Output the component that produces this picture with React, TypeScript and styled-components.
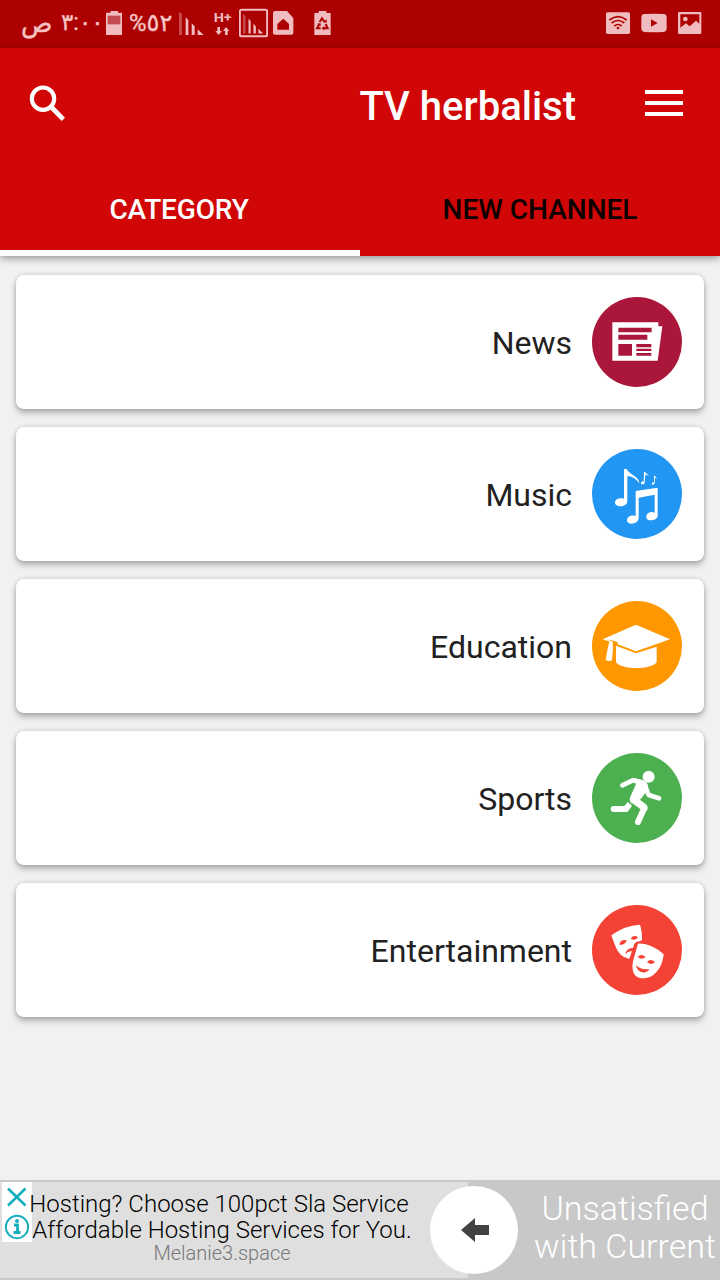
import React from 'react';
import styled, { createGlobalStyle } from 'styled-components';

const GlobalStyle = createGlobalStyle`
  * { box-sizing: border-box; }
  body { margin: 0; background: #f1f1f1; font-family: Roboto, "Liberation Sans", sans-serif; }
  svg { display: block; flex: none; }
`;

const Screen = styled.div`
  width: 720px;
  height: 1280px;
  display: flex;
  flex-direction: column;
  overflow: hidden;
  background: #f1f1f1;
`;

const StatusBar = styled.div`
  height: 48px;
  flex: none;
  display: flex;
  justify-content: space-between;
  padding: 0 18px 0 21px;
  background: #ad0000;
  color: #f5c4c4;
`;

const StatusGroup = styled.div`
  display: flex;
  align-items: flex-start;
`;

const StatusText = styled.span<{ $width: number; $gap?: number; $size?: number; $tracking?: number }>`
  width: ${p => p.$width}px;
  margin-left: ${p => p.$gap ?? 0}px;
  font: 400 ${p => p.$size ?? 26}px/46px Roboto, "DejaVu Sans", sans-serif;
  letter-spacing: ${p => p.$tracking ?? 0}px;
  -webkit-text-stroke: 0.4px currentColor;
  white-space: nowrap;
  display: flex;
  justify-content: flex-start;
`;

const StatusIcon = styled.svg<{ $gap?: number }>`
  height: 48px;
  margin-left: ${p => p.$gap ?? 0}px;
  fill: #f0bcbf;
`;

const NetworkLabel = styled.text`
  font: 700 39px Roboto, sans-serif;
`;

const Header = styled.header`
  height: 208px;
  flex: none;
  display: flex;
  flex-direction: column;
  background: #d10606;
  box-shadow: 0 2px 8px rgba(0, 0, 0, 0.42);
  z-index: 1;
`;

const Toolbar = styled.div`
  height: 112px;
  display: flex;
  align-items: center;
  padding: 0 37px 2px 27px;
`;

const Title = styled.h1`
  flex: 1;
  margin: 8px 69px 0 0;
  text-align: right;
  font-size: 40px;
  line-height: 48px;
  font-weight: 500;
  color: #fff;
`;

const Tabs = styled.div`
  height: 96px;
  display: flex;
`;

const Tab = styled.div<{ $active?: boolean }>`
  width: 50%;
  display: flex;
  align-items: center;
  justify-content: center;
  padding: ${p => (p.$active ? '8px 2px 0 0' : '2px 0 0')};
  border-bottom: ${p => (p.$active ? '6px solid #fff' : 'none')};
  font-size: 28px;
  font-weight: 500;
  letter-spacing: ${p => (p.$active ? '-0.15px' : '0')};
  color: ${p => (p.$active ? '#fff' : '#0d0000')};
`;

const List = styled.main`
  flex: 1;
  display: flex;
  flex-direction: column;
  gap: 18px;
  padding: 19px 16px 0;
`;

const Card = styled.div`
  height: 134px;
  display: flex;
  align-items: center;
  justify-content: flex-end;
  gap: 20px;
  padding-right: 22px;
  border-radius: 8px;
  background: #fff;
  box-shadow: 0 4px 6px rgba(0, 0, 0, 0.26), 0 0 4px rgba(0, 0, 0, 0.16);
`;

const CardLabel = styled.span`
  font-size: 32px;
  line-height: 38px;
  margin-top: 1px;
  color: #212121;
`;

const Ad = styled.footer`
  height: 100px;
  flex: none;
  display: flex;
  position: relative;
  padding: 2px 0;
  background: #c8c8c8;
  white-space: nowrap;
`;

const AdCopy = styled.div`
  width: 468px;
  display: flex;
  background: #dfdfdf;
`;

const AdControls = styled.div`
  width: 30px;
  height: 60px;
  margin-left: 2px;
  flex: none;
  background: #fff;
`;

const AdLines = styled.div`
  width: 380px;
  margin-left: -2px;
  padding-top: 9px;
  display: flex;
  flex-direction: column;
  align-items: center;
`;

const AdLine = styled.span<{ $shift?: number }>`
  margin-left: ${p => p.$shift ?? 0}px;
  font-size: 24px;
  line-height: 26px;
  font-weight: 300;
  color: #000;
`;

const AdSource = styled.span`
  margin-left: 4px;
  font-size: 20px;
  line-height: 20px;
  font-weight: 300;
  color: #777;
`;

const AdHeadline = styled.div`
  flex: 1;
  padding: 7px 0 0 62px;
  font-size: 34px;
  line-height: 38px;
  font-weight: 300;
  text-align: center;
  color: #fff;
`;

const AdButton = styled.div`
  position: absolute;
  left: 430px;
  top: 6px;
  width: 88px;
  height: 88px;
  border-radius: 50%;
  background: #fff;
  display: flex;
  align-items: center;
  justify-content: center;
  padding: 0 0 1px 2px;
`;

const NewsArt = () => (
  <svg width="90" height="90" viewBox="36 36 270 270">
    <circle cx="171" cy="171" r="135" fill="#aa173b" />
    <path fill="#fff" fillRule="evenodd" d="M97 112H235V124H247L233 227H97ZM115 128V142H215V128ZM115 149V164H202V149ZM115 177V212H156V177ZM169 177V187H214V177ZM169 191V198H214V191ZM169 204V212H214V204Z" />
  </svg>
);

const MusicArt = () => (
  <svg width="90" height="90" viewBox="36 27 270 270">
    <circle cx="171" cy="162" r="135" fill="#2196f3" />
    <g fill="#fff">
      <path d="M132 87L140 87C147 103 168 104 177 124L178 130C167 114 154 109 142 108V183C142 194 131 199 121 199C111 199 104 193 105 186C106 178 117 172 132 176Z" />
      <path d="M167 153L233 143V228C231 237 222 241 212 241C203 241 197 235 199 228C202 218 213 213 224 218V164L176 173V235C174 246 165 251 155 251C146 251 140 246 141 239C143 229 154 224 167 228Z" />
      <path d="M192 96L195 96C197 101 205 103 207 109C202 105 198 104 196 104L194 128C192 134 183 135 183 130C183 126 187 124 191 125Z" />
      <path d="M222 107L225 107C226 111 230 112 231 117C228 114 226 113 225 113L224 130C222 135 215 136 216 131C216 128 219 126 222 127Z" />
    </g>
  </svg>
);

const EducationArt = () => (
  <svg width="90" height="90" viewBox="36 33 270 270">
    <circle cx="171" cy="168" r="135" fill="#ff9800" />
    <g fill="#fff">
      <path d="M168 104L270 148L168 184L113 163L112 156L93 151L90 155L68 148Z" />
      <path d="M108 167L168 190L230 170V217C217 240 122 240 108 217Z" />
      <path d="M89 154C92 150 99 152 98 157L99 174L96 210C91 214 83 213 77 210C80 197 83 169 89 154Z" />
    </g>
    <path d="M87 150Q96 151 102 156L113 158" fill="none" stroke="#ff9800" strokeWidth="2" />
  </svg>
);

const SportsArt = () => (
  <svg width="90" height="90" viewBox="36 39 270 270">
    <circle cx="171" cy="174" r="135" fill="#4caf50" />
    <circle cx="206" cy="110" r="18" fill="#fff" />
    <path fill="#fff" d="M157 113L188 120Q204 126 203 138L197 158L180 179L201 196Q205 204 201 212L181 207L153 187Q146 181 151 170L168 132Z" />
    <g fill="none" stroke="#fff" strokeLinecap="round" strokeLinejoin="round">
      <path strokeWidth="14" d="M127 136L158 121L181 126" />
      <path strokeWidth="14" d="M195 136L206 165L237 175" />
      <path strokeWidth="18" d="M164 182L193 204L174 246" />
      <path strokeWidth="18" d="M147 195L138 207H101" />
    </g>
    <path d="M143 183L159 197" stroke="#4caf50" strokeWidth="4" />
  </svg>
);

const EntertainmentArt = () => (
  <svg width="90" height="90" viewBox="36 45 270 270">
    <circle cx="171" cy="180" r="135" fill="#f44336" />
    <g fill="#fff">
      <path d="M94 136Q134 106 180 104Q187 124 186 151L174 155Q162 157 160 174L148 207Q118 202 105 166Z" />
      <path d="M174 161Q211 158 251 193C248 228 226 264 191 265C157 265 154 237 160 210Z" />
    </g>
    <g fill="#f44336">
      <path d="M118 164Q121 147 140 151Q136 166 118 164Z" />
      <path d="M152 146Q158 133 174 141Q168 154 152 146Z" />
      <path d="M136 193Q139 173 161 173L157 184Q145 181 136 193Z" />
      <path d="M173 201Q183 189 197 201Q186 212 173 201Z" />
      <path d="M201 216Q212 204 225 216Q214 228 201 216Z" />
      <path d="M168 226Q184 241 208 237Q202 249 187 247Q171 244 168 226Z" />
    </g>
    <path d="M174 157Q165 158 163 172L151 207" fill="none" stroke="#f44336" strokeWidth="5" />
  </svg>
);

const categories = [
  { name: 'News', Art: NewsArt },
  { name: 'Music', Art: MusicArt },
  { name: 'Education', Art: EducationArt },
  { name: 'Sports', Art: SportsArt },
  { name: 'Entertainment', Art: EntertainmentArt },
];

const SignalBars = () => (
  <>
    <path d="M27 35L36 42V105H27Z" opacity=".4" />
    <path d="M47 52L55 60V105H47Z" />
    <path d="M65 70L74 79V105H65Z" />
    <path d="M83 88L101 105H83Z" />
  </>
);

export default function App() {
  return (
    <>
      <GlobalStyle />
      <Screen>
        <StatusBar>
          <StatusGroup>
            <StatusText $width={31}>ص</StatusText>
            <StatusText $width={37} $gap={9} $size={23} $tracking={-4}>٣:٠٠</StatusText>
            <StatusIcon $gap={8} width="16" viewBox="318 0 48 144">
              <path d="M332 33H354V38H366V105H318V38H332Z" />
              <path d="M323 47H361V73H323Z" fill="#c34c50" />
            </StatusIcon>
            <StatusText $width={41} $gap={7} $size={24} $tracking={-2.2}>%٥٢</StatusText>
            <StatusIcon $gap={9} width="25" viewBox="27 0 75 144"><SignalBars /></StatusIcon>
            <StatusIcon $gap={10} width="18" viewBox="133 0 54 144">
              <NetworkLabel x="132" y="66" textLength="54" lengthAdjust="spacingAndGlyphs">H+</NetworkLabel>
              <path d="M143 81H151V93H157L147 105L137 93H143ZM166 105V93H160L169 81L179 93H174V105Z" />
            </StatusIcon>
            <StatusIcon $gap={7} width="29" viewBox="207 0 87 144">
              <rect x="209.500" y="29.500" width="82" height="79" rx="5" fill="none" stroke="#f0bcbf" strokeWidth="6" />
              <g transform="translate(197 13) scale(.82 .83)"><SignalBars /></g>
            </StatusIcon>
            <StatusIcon $gap={5} width="21" viewBox="309 0 63 144">
              <path fillRule="evenodd" d="M315 33H351L370 54V99Q370 104 365 104H315Q309 104 309 99V39Q309 33 315 33ZM340 56L322 72V89H357V72Z" />
            </StatusIcon>
            <StatusIcon $gap={20} width="17" viewBox="431 0 51 144">
              <path d="M445 33H468V39H481V105H432V39H445Z" />
              <g fill="none" stroke="#ad0000" strokeWidth="6">
                <path d="M448 66L455 55L463 66" />
                <path d="M447 72L440 85H451" />
                <path d="M466 72L472 85H458" />
              </g>
              <path fill="#ad0000" d="M460 68L470 67L468 57ZM440 72L450 69L452 78ZM462 78V92L454 85Z" />
            </StatusIcon>
          </StatusGroup>
          <StatusGroup>
            <StatusIcon width="24" viewBox="48 0 72 144">
              <rect x="48" y="37" width="72" height="65" rx="5" />
              <g fill="none" stroke="#ad0000" strokeWidth="5">
                <path d="M58 60Q84 40 110 60" />
                <path d="M65 69Q84 54 103 69" />
                <path d="M73 78Q84 69 95 78" />
              </g>
              <circle cx="84" cy="84" r="4" fill="#ad0000" />
            </StatusIcon>
            <StatusIcon $gap={11} width="26" viewBox="153 0 78 144">
              <path fillRule="evenodd" d="M163 42Q192 40 221 42Q230 43 230 53V85Q230 95 221 96Q192 98 163 96Q154 95 154 85V53Q154 43 163 42ZM183 58V80L203 69Z" />
            </StatusIcon>
            <StatusIcon $gap={11} width="24" viewBox="264 0 72 144">
              <path fillRule="evenodd" d="M268 36H331Q334 36 334 39V98Q334 102 331 102H268Q264 102 264 98V39Q264 36 268 36ZM271 43V83L288 70L299 79L318 62L328 71V43Z" />
              <circle cx="286" cy="57" r="7" />
            </StatusIcon>
          </StatusGroup>
        </StatusBar>

        <Header>
          <Toolbar>
            <svg width="42" height="42" viewBox="81 66 126 126" fill="none" stroke="#fff">
              <circle cx="129" cy="116" r="33.500" strokeWidth="12.500" />
              <path d="M151 138L190 178" strokeWidth="14" />
            </svg>
            <Title>TV herbalist</Title>
            <svg width="38" height="26" viewBox="0 0 38 26" fill="#fff">
              <path d="M0 0H38V4H0ZM0 11H38V15H0ZM0 22H38V26H0Z" />
            </svg>
          </Toolbar>
          <Tabs>
            <Tab $active>CATEGORY</Tab>
            <Tab>NEW CHANNEL</Tab>
          </Tabs>
        </Header>

        <List>
          {categories.map(({ name, Art }) => (
            <Card key={name}>
              <CardLabel>{name}</CardLabel>
              <Art />
            </Card>
          ))}
        </List>

        <Ad>
          <AdCopy>
            <AdControls>
              <svg width="30" height="60" viewBox="0 0 30 60" fill="none" stroke="#15aebd">
                <path d="M6 6.5L23.500 23.500M23.500 6.500L6 23.500" strokeWidth="2.600" />
                <circle cx="15" cy="45" r="11.200" strokeWidth="1.900" />
                <path d="M12 43H15.500V50M11.500 50.500H18.500" strokeWidth="2.800" />
                <circle cx="15" cy="39" r="2" fill="#15aebd" stroke="none" />
              </svg>
            </AdControls>
            <AdLines>
              <AdLine $shift={-2}>Hosting? Choose 100pct Sla Service</AdLine>
              <AdLine $shift={4}>Affordable Hosting Services for You.</AdLine>
              <AdSource>Melanie3.space</AdSource>
            </AdLines>
          </AdCopy>
          <AdHeadline>
            Unsatisfied
            <br />
            with Current
          </AdHeadline>
          <AdButton>
            <svg width="28" height="24" viewBox="0 0 28 24" fill="#424242">
              <path d="M0 12L14 0V7H28V17H14V24Z" />
            </svg>
          </AdButton>
        </Ad>
      </Screen>
    </>
  );
}
